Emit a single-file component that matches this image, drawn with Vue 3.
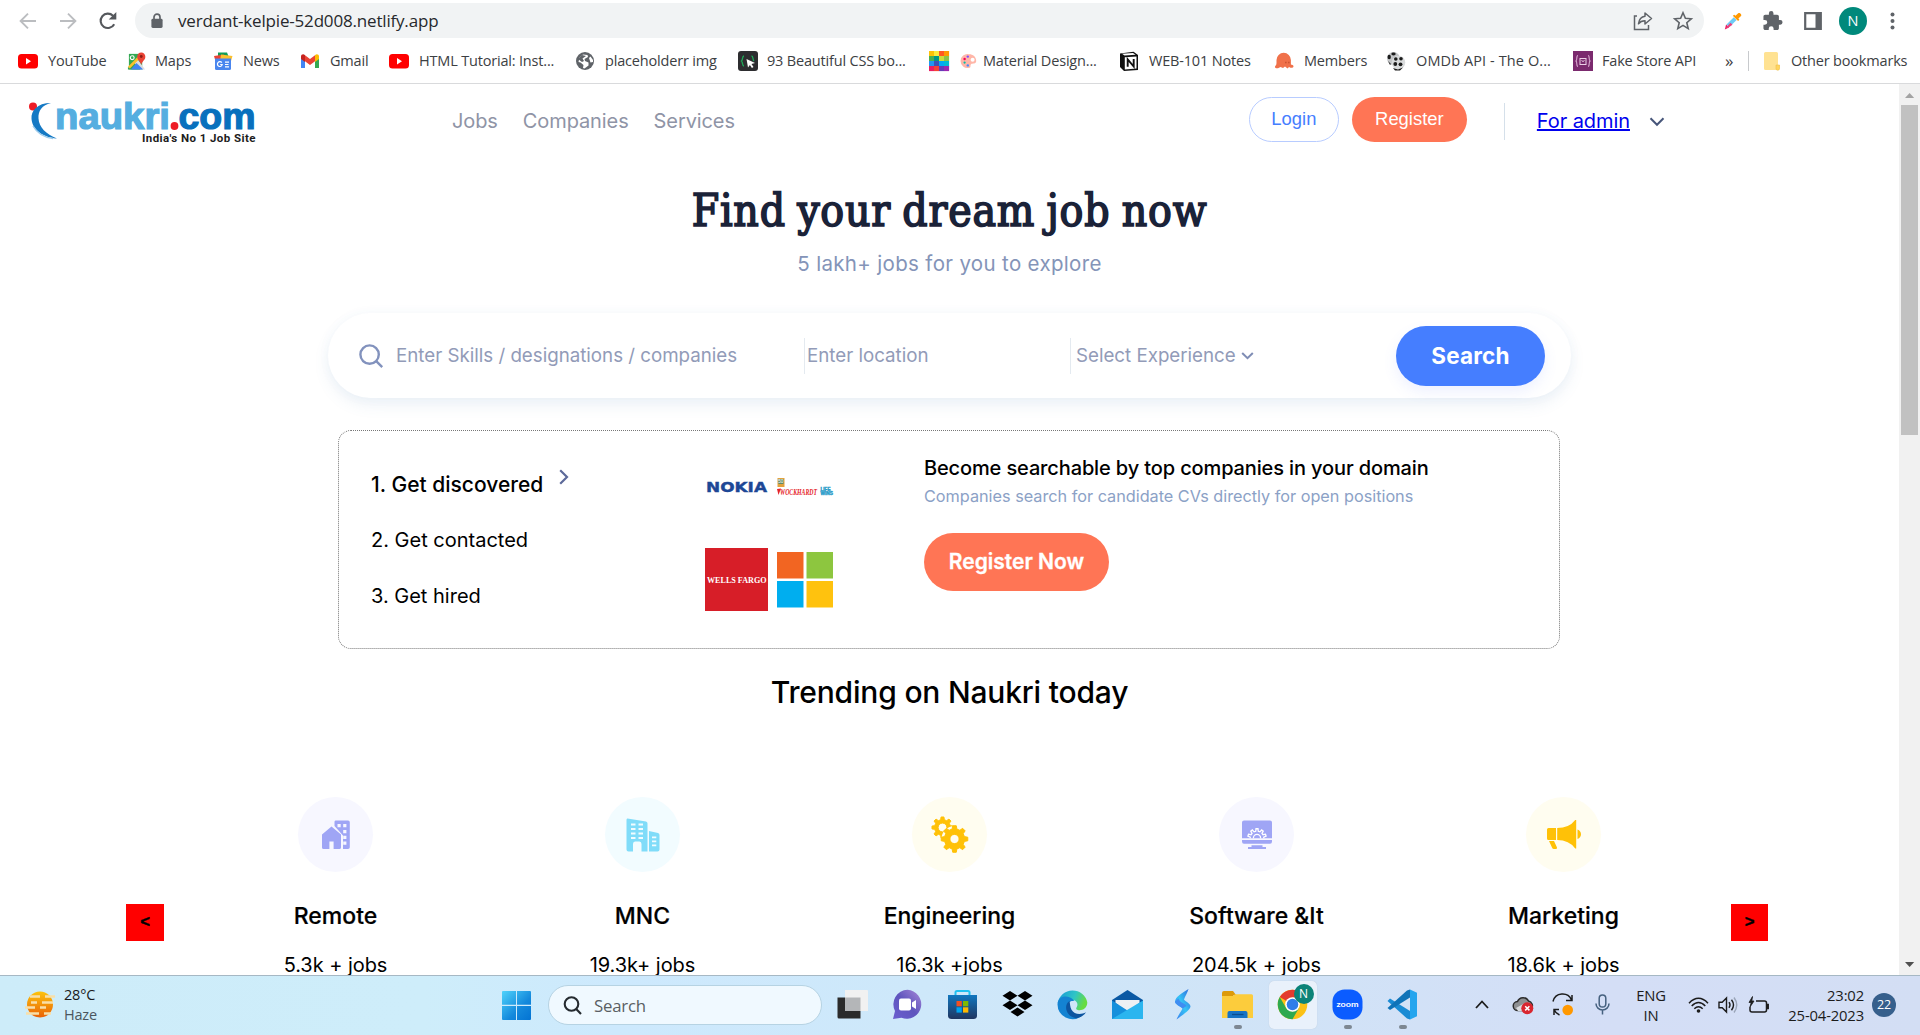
<script setup>
const bookmarks = [
  { icon: 'yt', label: 'YouTube', x: 18, gap: 10, iw: 20 },
  { icon: 'maps', label: 'Maps', x: 127, gap: 9, iw: 19 },
  { icon: 'news', label: 'News', x: 213, gap: 10, iw: 20 },
  { icon: 'gmail', label: 'Gmail', x: 300, gap: 10, iw: 20 },
  { icon: 'yt', label: 'HTML Tutorial: Inst...', x: 389, gap: 10, iw: 20 },
  { icon: 'globe', label: 'placeholderr img', x: 575, gap: 10, iw: 20 },
  { icon: 'css', label: '93 Beautiful CSS bo...', x: 738, gap: 9, iw: 20 },
  { icon: 'grid', label: '', x: 929, gap: 0, iw: 20 },
  { icon: 'palette', label: 'Material Design...', x: 961, gap: 6, iw: 16 },
  { icon: 'notion', label: 'WEB-101 Notes', x: 1119, gap: 10, iw: 20 },
  { icon: 'members', label: 'Members', x: 1274, gap: 10, iw: 20 },
  { icon: 'omdb', label: 'OMDb API - The O...', x: 1386, gap: 10, iw: 20, loose: true },
  { icon: 'fake', label: 'Fake Store API', x: 1573, gap: 9, iw: 20 },
]
const slot = (i) => (i + 1 < bookmarks.length ? bookmarks[i + 1].x : 1725) - bookmarks[i].x

const swatches = [
  '#ffc107', '#ffeb3b', '#ff5722', '#ff9800',
  '#4caf50', '#009688', '#cddc39', '#8bc34a',
  '#2196f3', '#3f51b5', '#03a9f4', '#00bcd4',
  '#e91e63', '#f44336', '#673ab7', '#9c27b0',
]

const trends = [
  { icon: 'remote', title: 'Remote', jobs: '5.3k + jobs', bg: '#f7f7ff' },
  { icon: 'mnc', title: 'MNC', jobs: '19.3k+ jobs', bg: '#f2fcff' },
  { icon: 'eng', title: 'Engineering', jobs: '16.3k +jobs', bg: '#fffdf0' },
  { icon: 'soft', title: 'Software &It', jobs: '204.5k + jobs', bg: '#f7f7ff' },
  { icon: 'mkt', title: 'Marketing', jobs: '18.6k + jobs', bg: '#fffdf0' },
]

function gear(cx, cy, outer, inner, hole, teeth, turn = 0) {
  const step = (Math.PI * 2) / teeth
  const at = (r, a) => `${(cx + r * Math.sin(a)).toFixed(2)} ${(cy - r * Math.cos(a)).toFixed(2)}`
  let d = ''
  for (let i = 0; i < teeth; i++) {
    const a = i * step + turn
    d += `${i ? 'L' : 'M'}${at(inner, a - step * 0.3)}L${at(outer, a - step * 0.17)}L${at(outer, a + step * 0.17)}L${at(inner, a + step * 0.3)}`
  }
  return `${d}ZM${cx - hole} ${cy}a${hole} ${hole} 0 1 0 ${hole * 2} 0a${hole} ${hole} 0 1 0 ${-hole * 2} 0Z`
}
const bigGear = gear(32.5, 29, 13.4, 10.2, 4.6, 8)
const smallGear = gear(20.5, 17.5, 10.6, 8, 4.4, 8)
const screenGear = gear(15, 18, 9.3, 6.8, 3.6, 10)

const apps = ['tasks', 'chat', 'store', 'dropbox', 'edge', 'mail', 'stream', 'folder', 'chrome', 'zoom', 'code']
const running = ['folder', 'zoom', 'code']
</script>

<template>
  <div class="screen">
    <header class="browser">
      <div class="toolbar">
        <svg class="tb back" width="20" height="20" viewBox="0 0 20 20" fill="none" stroke="#bbbdc0" stroke-width="1.9"><path d="M18 10H3M10 2.6L2.6 10l7.4 7.4" /></svg>
        <svg class="tb fwd" width="20" height="20" viewBox="0 0 20 20" fill="none" stroke="#bbbdc0" stroke-width="1.9"><path d="M2 10h15M10 2.6l7.4 7.4-7.4 7.4" /></svg>
        <svg class="tb reload" width="20" height="20" viewBox="0 0 20 20"><path d="M16.2 13.2A7.2 7.2 0 1 1 15 4.8" fill="none" stroke="#55585c" stroke-width="2.1" /><path d="M18.3 1v7.6h-7.6z" fill="#55585c" /></svg>
        <div class="omnibox">
          <svg width="12" height="16" viewBox="0 0 12 16"><path d="M3 6.500V4.200a3 3 0 0 1 6 0v2.300" fill="none" stroke="#5f6368" stroke-width="1.7" /><rect x=".4" y="5.800" width="11.200" height="9.200" rx="1.400" fill="#5f6368" /></svg>
          <span class="url">verdant-kelpie-52d008.netlify.app</span>
          <svg class="share" width="20" height="20" viewBox="0 0 20 20" fill="none" stroke="#5f6368" stroke-width="1.500"><path d="M4 5H1.500v13.500h14V14" /><path d="M12 2l6.500 5.500L12 13V9.800c-3 0-5 1-6.500 3C6 8.500 8.500 5.600 12 5.200z" stroke-linejoin="round" /></svg>
          <svg width="20" height="20" viewBox="0 0 20 20" fill="none" stroke="#5f6368" stroke-width="1.600"><path d="M10 1.800l2.400 5.500 5.900.5-4.500 3.900 1.400 5.900-5.200-3.200-5.200 3.200 1.400-5.900-4.500-3.900 5.900-.5z" /></svg>
        </div>
        <svg class="ext pick" width="18" height="18" viewBox="0 0 18 18"><path d="M2.500 12.500L9.800 5.200l2.800 2.800L5.200 15.300z" fill="#6ecbf5" /><path d="M.8 17.400l1.300-4.900 3 3z" fill="#e91e63" /><path d="M2 15.800l4.500-5 2 2-4.500 3z" fill="#ec407a" /><path d="M8.800 3.800l5.300 5.300 1.300-1.300-1-1.200 2.600-2.600c1.200-1.400-1.400-4-2.800-2.800l-2.700 2.600-1.200-1z" fill="#ff9800" /></svg>
        <svg class="ext puzzle" width="20" height="20" viewBox="2 1 21 22"><path d="M20.500 11H19V7c0-1.100-.9-2-2-2h-4V3.500a2.500 2.500 0 0 0-5 0V5H4c-1.100 0-2 .9-2 2v3.800h1.500a2.700 2.700 0 0 1 0 5.400H2V20c0 1.100.9 2 2 2h3.800v-1.500a2.700 2.700 0 0 1 5.400 0V22H17c1.100 0 2-.9 2-2v-4h1.500a2.500 2.500 0 0 0 0-5z" fill="#5f6368" /></svg>
        <svg class="ext panel" width="18" height="18" viewBox="0 0 18 18"><path d="M1.200 1.200h15.600v15.600H1.200z" fill="none" stroke="#5f6368" stroke-width="2.200" /><path d="M11.500 1H17v16h-5.500z" fill="#5f6368" /></svg>
        <div class="avatar">N</div>
        <svg class="dots" width="5" height="18" viewBox="0 0 5 18" fill="#5f6368"><circle cx="2.500" cy="2.600" r="2" /><circle cx="2.500" cy="9" r="2" /><circle cx="2.500" cy="15.400" r="2" /></svg>
      </div>

      <div class="bookmarks">
        <div v-for="(b, i) in bookmarks" :key="i" :class="['bm', { loose: b.loose }]" :style="{ width: slot(i) + 'px', columnGap: b.gap + 'px' }">
          <svg :width="b.iw" height="20" viewBox="0 0 20 20">
            <template v-if="b.icon === 'yt'"><rect y="3" width="20" height="14.500" rx="3.500" fill="#f00" /><path d="M8 7l5 3.200L8 13.400z" fill="#fff" /></template>
            <template v-else-if="b.icon === 'maps'"><path d="M2 2.500h14V19H2z" fill="#34a853" /><path d="M1 18L11 8l8 11H2z" fill="#dadce0" /><path d="M1 19V17L7 11l7 8z" fill="#34a853" /><path d="M4 19l6-7 7 7z" fill="#4285f4" /><path d="M1 16L14 3l2 2L3 18z" fill="#fbc02d" /><circle cx="5.500" cy="6.500" r="2" fill="none" stroke="#fff" stroke-width="1.200" /><path d="M15 1a4.300 4.300 0 0 0-4.300 4.500C10.700 9 14 10 15 14c1-4 4.300-5 4.300-8.500A4.300 4.300 0 0 0 15 1z" fill="#ea4335" /><circle cx="15" cy="5.300" r="1.500" fill="#8c1f15" /></template>
            <template v-else-if="b.icon === 'news'"><path d="M5 1.500h9l2 5H5z" fill="#0f9d58" /><path d="M1 5l10-1.500 1 5H2z" fill="#ea4335" /><path d="M8 3.500L19.500 5 18 10H7z" fill="#fbc02d" /><path d="M2 7.500h16v10a1.500 1.500 0 0 1-1.500 1.500h-13A1.500 1.500 0 0 1 2 17.500z" fill="#4a86ee" /><path d="M8.800 11.700A2.400 2.400 0 1 0 9.200 13.500H7.200M12 11.200h4M12 13.500h3.500M12 15.800h4" stroke="#fff" stroke-width="1.200" fill="none" /></template>
            <template v-else-if="b.icon === 'gmail'"><path d="M1 5v12h4V9z" fill="#4285f4" /><path d="M19 5v12h-4V9z" fill="#34a853" /><path d="M1 5.500C1 3.500 3.300 2.600 4.800 4L5 4.200V11L1 8z" fill="#c5221f" /><path d="M19 5.500c0-2-2.300-2.900-3.800-1.500l-.2.200V11l4-3z" fill="#fbbc04" /><path d="M5 4.200l5 3.800 5-3.800V10.200L10 14 5 10.200z" fill="#ea4335" /></template>
            <template v-else-if="b.icon === 'globe'"><circle cx="10" cy="10" r="9" fill="#5f6368" /><path d="M4.500 6.500L8 3.500l4.500.5.500 2-3.500 2 .5 2 3.500 1.500v3l-4 3-1.500-.5.500-3-3-2.500L3.500 11z" fill="#fff" /><path d="M3 8l4 3 2-1-1.500-2.500L11 5l-4-1zM15 6l2.500 1.500.5 4-3 .5-2-2z" fill="#5f6368" /><path d="M14 7l1.500-1.500L18 9v2l-2.500.5z" fill="#fff" /></template>
            <template v-else-if="b.icon === 'css'"><rect width="20" height="20" rx="3" fill="#2d2d30" /><path d="M6 5c-2 0-1 4-2.500 5C5 11 4 15 6 15M13.500 5c2 0 1 4 2.500 5" fill="none" stroke="#1faa59" stroke-width="1.300" /><path d="M8.500 8l8.500 4-3.500 1 2 3-1.600 1-2-3-1.900 2.500z" fill="#fff" /></template>
            <template v-else-if="b.icon === 'grid'"><rect v-for="(c, n) in swatches" :key="n" :x="(n % 4) * 5" :y="Math.floor(n / 4) * 5" width="5.100" height="5.100" :fill="c" /></template>
            <template v-else-if="b.icon === 'palette'"><path d="M10 1.500a8.700 8.700 0 1 0 0 17c3 0 1-3 2.500-4.500S19 14.500 19 10C19 4.500 15 1.500 10 1.500z" fill="#ffb6a8" /><circle cx="4.500" cy="7.500" r="1.500" fill="#f50057" /><circle cx="4.500" cy="12" r="1.400" fill="#00bfa5" /><circle cx="8.500" cy="4.500" r="1.500" fill="#7c4dff" /><circle cx="8.500" cy="15.500" r="1.500" fill="#448aff" /><circle cx="14.500" cy="8.500" r="2.500" fill="#fff" /></template>
            <template v-else-if="b.icon === 'notion'"><path d="M1 2.500L14.500.800 19 4v15L5 20 1 16z" fill="#111" /><path d="M3 2.800l11-.8 2.600 1.800L5.500 4.600zM5.800 6.200L17.500 5.400v12.200L5.800 18.400z" fill="#fff" /><path d="M8.700 15.800V8.300l6 7.200V8" fill="none" stroke="#111" stroke-width="1.900" /></template>
            <template v-else-if="b.icon === 'members'"><path d="M2.500 12V9a7.200 7.200 0 0 1 14.400 0v4.500c1 .2 2.600.5 2.600 2 0 1.200-1.500 1.500-3 1.300l-1.500-.8-1.500 1.500L11 15.500l-2 1.500-2.500-1L4 17.200c-2 .3-3.500-.5-3-1.700.3-1 1.500-1 1.500-3.500z" fill="#f0714a" /><path d="M11.500 11.500h.8M14.500 11.500h.8" stroke="#a33b1d" stroke-width="1.300" /></template>
            <template v-else-if="b.icon === 'omdb'"><circle cx="7.500" cy="7.500" r="6.500" fill="#c3c5c7" /><circle cx="12.500" cy="11.500" r="6.800" fill="#d9dbdc" /><g fill="#1c1c1c"><ellipse cx="3.200" cy="6" rx="1.700" ry="2.300" /><ellipse cx="7.500" cy="3" rx="2.200" ry="1.400" /><circle cx="9.800" cy="8" r="1.800" /><circle cx="15" cy="7.800" r="1.800" /><circle cx="9.300" cy="13" r="1.900" /><circle cx="14.500" cy="13.300" r="1.900" /><path d="M7 17l5 1.500 5-2-3 3H9zM2 10l3 3-1 1z" /></g></template>
            <template v-else-if="b.icon === 'fake'"><rect width="20" height="20" fill="#7b2a6e" /><path d="M5 4.500c-2 0-.5 4.500-2 5.500 1.500 1 0 5.500 2 5.500M15 4.500c2 0 .5 4.500 2 5.500-1.500 1 0 5.500-2 5.500" fill="none" stroke="#d9a9d0" stroke-width="1.100" /><rect x="7" y="7.500" width="6" height="6" fill="none" stroke="#ecd0e6" /><path d="M8.500 9.500q1.500 2 3 0" stroke="#ecd0e6" fill="none" /></template>
          </svg>
          <span>{{ b.label }}</span>
        </div>
        <span class="more">»</span>
        <div class="bm other">
          <svg width="18" height="20" viewBox="0 0 18 20"><path d="M2.500 1h11A1.500 1.500 0 0 1 15 2.500V14h1.500v3.500A1.500 1.500 0 0 1 15 19H2.500A1.500 1.500 0 0 1 1 17.500v-15A1.500 1.500 0 0 1 2.500 1z" fill="#ffe292" /><path d="M15 14h-2v3.500a1.500 1.500 0 0 0 3.500 0V14z" fill="#ffd55e" stroke="#eec04e" stroke-width=".6" /></svg>
          <span>Other bookmarks</span>
        </div>
      </div>
    </header>

    <main class="view">
      <div class="page">
        <nav class="nav">
          <svg class="logo" width="228" height="42" viewBox="0 0 228 42">
            <circle cx="4" cy="4.500" r="4" fill="#ee1c25" />
            <path d="M22 1C8 1 2 9 2.500 16.500 3 26 11 35 28 36.500 17 32 10 25.500 9.500 16.500 9 9 13 3 22 1z" fill="#1579c4" />
            <path d="M4 24c4 7 11 11.500 20 12.500" fill="none" stroke="#9ccbec" stroke-width="1.500" />
            <text x="26" y="27" textLength="115" lengthAdjust="spacingAndGlyphs" class="brand" fill="#55aee0" stroke="#55aee0">naukri</text>
            <circle cx="145.500" cy="24" r="3.900" fill="#ee1c25" />
            <text x="149.500" y="27" textLength="77" lengthAdjust="spacingAndGlyphs" class="brand" fill="#0870bd" stroke="#0870bd">com</text>
            <text x="113" y="39.800" textLength="113.500" lengthAdjust="spacing" class="tag">India's No 1 Job Site</text>
          </svg>
          <a class="link">Jobs</a><a class="link">Companies</a><a class="link">Services</a>
          <button class="login">Login</button>
          <button class="register">Register</button>
          <div class="admin"><a>For admin</a>
            <svg width="16" height="10" viewBox="0 0 16 10" fill="none" stroke="#47567a" stroke-width="2"><path d="M1.500 1.200L8 7.800l6.500-6.600" /></svg>
          </div>
        </nav>

        <h1>Find your dream job now</h1>
        <p class="sub">5 lakh+ jobs for you to explore</p>

        <div class="search">
          <svg width="24" height="24" viewBox="0 0 24 24" fill="none" stroke="#8292bd" stroke-width="2.400"><circle cx="10.600" cy="10.600" r="9.200" /><path d="M17.200 17.200l6 6" /></svg>
          <span class="f skills">Enter Skills / designations / companies</span>
          <span class="f loc">Enter location</span>
          <span class="f exp">Select Experience
            <svg width="13" height="8" viewBox="0 0 13 8" fill="none" stroke="#7f8db5" stroke-width="2"><path d="M1.200 1l5.300 5.200L11.800 1" /></svg>
          </span>
          <button>Search</button>
        </div>

        <section class="card">
          <ol>
            <li class="on">1. Get discovered<svg width="10" height="16" viewBox="0 0 10 16" fill="none" stroke="#5d6a9a" stroke-width="2.200"><path d="M1.200 1.200L8 8l-6.800 6.800" /></svg></li>
            <li>2. Get contacted</li>
            <li>3. Get hired</li>
          </ol>
          <div class="logos">
            <svg width="63" height="24" viewBox="0 0 63 24"><text x="1" y="16" textLength="61" lengthAdjust="spacingAndGlyphs" class="nokia">NOKIA</text></svg>
            <svg width="58" height="24" viewBox="0 0 58 24"><rect x=".5" y="2" width="7" height="9" fill="#e3a23c" /><rect x="1.500" y="3" width="5" height="5" fill="#5d8a6a" /><text x="1.300" y="7.300" font-size="4.500" fill="#fff" font-family="Liberation Sans">50</text><text x="3" y="19" textLength="37" lengthAdjust="spacingAndGlyphs" class="wock">WOCKHARDT</text><path d="M0 13l4-.5L1.500 19z" fill="#e5242a" /><g class="wins"><text x="43.500" y="14.500" textLength="10" lengthAdjust="spacingAndGlyphs">LIFE</text><text x="43.500" y="19" textLength="12.500" lengthAdjust="spacingAndGlyphs">WINS</text></g></svg>
            <div class="wells"><svg width="63" height="20" viewBox="0 0 63 20"><text x="2" y="13" textLength="59.500" lengthAdjust="spacingAndGlyphs">WELLS FARGO</text></svg></div>
            <svg width="56" height="56" viewBox="0 0 56 56"><path d="M0 0h26.500v26.500H0z" fill="#f26522" /><path d="M29.500 0H56v26.500H29.500z" fill="#8dc63f" /><path d="M0 29h26.500v26.500H0z" fill="#00aeef" /><path d="M29.500 29H56v26.500H29.500z" fill="#ffc20e" /></svg>
          </div>
          <div class="pitch">
            <h3>Become searchable by top companies in your domain</h3>
            <p>Companies search for candidate CVs directly for open positions</p>
            <button>Register Now</button>
          </div>
        </section>

        <h2>Trending on Naukri today</h2>

        <section class="trends">
          <button class="arrow">&lt;</button>
          <div class="cells">
            <article v-for="t in trends" :key="t.title">
              <div class="disc" :style="{ background: t.bg }">
                <svg v-if="t.icon === 'remote'" width="30" height="30" viewBox="0 0 30 30"><path fill-rule="evenodd" d="M14.500.500h12.500a1.800 1.800 0 0 1 1.800 1.800v25a1.800 1.800 0 0 1-1.800 1.800h-5V15.500L13.500 6V2a1.500 1.500 0 0 1 1-1.500zM16.500 4v3.200h3.200V4zM22.200 4v3.200h3.200V4zM22.200 10v3.200h3.200V10zM22.200 15.800V19h3.200v-3.200zM22.200 21.600v3.200h3.200v-3.200z" fill="#9fa5f5" /><path d="M1 14.500L10.500 6.500 20 14.500v13a1.600 1.600 0 0 1-1.600 1.600H12.600v-7.500H8.400v7.500H2.600A1.600 1.600 0 0 1 1 27.500z" fill="#9fa5f5" /></svg>
                <svg v-else-if="t.icon === 'mnc'" width="34" height="34" viewBox="0 0 34 34"><path fill-rule="evenodd" d="M1.500.500L20 3.500q1.500.300 1.500 2V33.500h-6V26q0-2.500-2-2.500h-4.500q-2 0-2 2.500v7.500H2.500Q.500 33.500.500 31.500V2Q.500.300 1.500.500zM5 5.500v2h4.500v-2zM12.500 5.500v2H17v-2zM5 10v2h4.500v-2zM12.500 10v2H17v-2zM5 14.500v2h4.500v-2zM12.500 14.500v2H17v-2zM5 19v2h4.500v-2zM12.500 19v2H17v-2z" fill="#80dcf9" /><path fill-rule="evenodd" d="M23 13l9 2q1.500.300 1.500 2v14.500q0 2-2 2H23zM26 18.500v1.700h4.300v-1.700zM26 22.500v1.700h4.300v-1.700zM26 26.500v1.700h4.300v-1.700z" fill="#80dcf9" /></svg>
                <svg v-else-if="t.icon === 'eng'" width="56" height="50" viewBox="0 0 56 50"><path fill-rule="evenodd" :d="smallGear" fill="#ffc107" stroke="#ffc107" stroke-linejoin="round" /><circle cx="32.500" cy="29" r="13" :fill="t.bg" /><path fill-rule="evenodd" :d="bigGear" fill="#ffc107" stroke="#ffc107" stroke-linejoin="round" /></svg>
                <svg v-else-if="t.icon === 'soft'" width="32" height="30" viewBox="-.5 0 31 30"><path d="M0 2.500Q0 .500 2 .500h26q2 0 2 2v15.700H0zM0 20h30v1.500q0 2.300-2 2.300H2q-2 0-2-2.300zM9.500 25.300h11V27H24v2H6v-2h3.500z" fill="#9fa5f5" /><clipPath id="lap"><path d="M0 0h30v18.300H0z" /></clipPath><path clip-path="url(#lap)" fill-rule="evenodd" :d="screenGear" fill="none" stroke="#fff" stroke-width="1.300" /></svg>
                <svg v-else width="36" height="30" viewBox="0 0 36 30"><path d="M2.500 8H10v12H2.500Q1 20 1 18.500V9.500Q1 8 2.500 8zM3 21h5l3 6.500q.500 1.500-1.500 1.500H8q-1.500 0-2-1.500zM11.200 8q12 0 18-8h1v28.500h-1q-6-8.500-18-8.500zM31.500 9.500Q35 11 35 14.200T31.500 19z" fill="#ffc107" /></svg>
              </div>
              <h4>{{ t.title }}</h4>
              <p>{{ t.jobs }}</p>
            </article>
          </div>
          <button class="arrow next">&gt;</button>
        </section>
      </div>

      <div class="scroll">
        <svg width="21" height="21" viewBox="0 0 21 21"><path d="M6 14l4.600-5 4.600 5z" fill="#a3a3a3" /></svg>
        <div class="thumb"></div>
        <svg width="21" height="21" viewBox="0 0 21 21"><path d="M6 8l4.600 5 4.600-5z" fill="#505050" /></svg>
      </div>
    </main>

    <footer class="taskbar">
      <div class="weather">
        <svg width="30" height="28" viewBox="0 0 30 28"><defs><linearGradient id="sun" x1="0" y1="0" x2="0" y2="1"><stop offset="0" stop-color="#fdc30d" /><stop offset="1" stop-color="#e96207" /></linearGradient></defs><circle cx="15" cy="13.500" r="13" fill="url(#sun)" /><path d="M5 5.500h10M20 5.500h10M6 11.500h6M17 11.500h11M0 16.500h10M15 16.500h6M1 22.500h13M19 22.500h7" stroke="#f8dfa9" stroke-width="2.600" /></svg>
        <div><b>28°C</b><span>Haze</span></div>
      </div>
      <svg class="start" width="29" height="29" viewBox="0 0 29 29"><defs><linearGradient id="win" x1="0" y1="0" x2="1" y2="1"><stop offset="0" stop-color="#50d3fb" /><stop offset=".6" stop-color="#1489dc" /><stop offset="1" stop-color="#0373d3" /></linearGradient></defs><path d="M1 0h13v13.800H0V1a1 1 0 0 1 1-1zM15 0h13a1 1 0 0 1 1 1v12.800H15zM0 15h14v14H1a1 1 0 0 1-1-1zM15 15h14v13a1 1 0 0 1-1 1H15z" fill="url(#win)" /></svg>
      <div class="find"><svg width="19" height="19" viewBox="0 0 19 19" fill="none" stroke="#252b30" stroke-width="2.100"><circle cx="8.500" cy="8" r="6.800" /><path d="M13.200 13l4.800 5" /></svg><span>Search</span></div>
      <div class="apps">
        <div v-for="a in apps" :key="a" class="app">
          <div :class="['tile', { active: a === 'chrome' }]">
            <svg width="31" height="31" viewBox="0 0 31 31">
              <template v-if="a === 'tasks'"><path d="M.500 8.500h23v21H2A1.500 1.500 0 0 1 .500 28z" fill="#2b2b2b" /><path d="M8 1h22a1 1 0 0 1 1 1v20H8z" fill="#f1f1f1" /><path d="M8 8.500h15.500V22H8z" fill="#b4b6b8" /></template>
              <template v-else-if="a === 'chat'"><defs><linearGradient id="ch" x1="0" y1="1" x2="1" y2="0"><stop offset="0" stop-color="#6a5fd0" /><stop offset=".5" stop-color="#5f55bd" /><stop offset="1" stop-color="#a888d8" /></linearGradient></defs><path d="M15.500.800a14.500 14.500 0 1 1-6 28L1 30l2-8A14.500 14.500 0 0 1 15.500.800z" fill="url(#ch)" /><rect x="7" y="9.500" width="12" height="12" rx="2" fill="#fff" /><path d="M20 13.500l4-2.500v9L20 17.500z" fill="#fff" /></template>
              <template v-else-if="a === 'store'"><defs><linearGradient id="st" x1="0" y1="0" x2="0" y2="1"><stop offset="0" stop-color="#1177bf" /><stop offset="1" stop-color="#203660" /></linearGradient></defs><path d="M8.500 7V3.500Q8.500 2 10 2h11q1.500 0 1.500 1.500V7" fill="none" stroke="#22c1f0" stroke-width="2" /><path d="M1 6h29v20.500Q30 30 26.500 30h-22Q1 30 1 26.500z" fill="url(#st)" /><path d="M9.500 12h5.300v5.300H9.500z" fill="#f25022" /><path d="M16 12h5.300v5.300H16z" fill="#7fba00" /><path d="M9.500 18.300h5.300v5.300H9.500z" fill="#00a4ef" /><path d="M16 18.300h5.300v5.300H16z" fill="#ffb900" /></template>
              <template v-else-if="a === 'dropbox'"><path d="M8 2l7.500 4.700L8 11.400.500 6.700zM23 2l7.500 4.700L23 11.400l-7.500-4.700zM8 11.600l7.500 4.700L8 21 .500 16.300zM23 11.600l7.500 4.700L23 21l-7.500-4.700zM15.500 18.500l7 4.400-7 4.700-7-4.700z" fill="#000" /></template>
              <template v-else-if="a === 'edge'"><defs><linearGradient id="e1" x1="0" y1="0" x2="1" y2=".3"><stop offset="0" stop-color="#1596d8" /><stop offset=".6" stop-color="#30c5c6" /><stop offset="1" stop-color="#66dc42" /></linearGradient></defs><path d="M.800 14A15 15 0 0 1 30.300 13.500c0 6-5.500 8.500-9.500 7.500-2-.500-2-1.500-1-3 2-3.500-.800-7-4.300-7C9 11 6 14 .800 14z" fill="url(#e1)" /><path d="M.500 15.500C.500 8 8 6 13 8.500c2 1 4 2.500 4 3.500-6-1-8 5-5 10 2.500 4.200 7 6.500 12 5.500A15 15 0 0 1 .500 15.500z" fill="#1483d2" /><path d="M12.500 12C6 16 9 28 20 29.200c4-.700 7-3 9-6-5 2.800-12 2.300-14.500-2.500-1.600-3-1.300-6-2-8.700z" fill="#0d55a0" /></template>
              <template v-else-if="a === 'mail'"><path d="M0 11L15.500 1 31 11v5H0z" fill="#0b59a4" /><path d="M3.500 11h24v3l-12 8-12-8z" fill="#eef0f3" /><path d="M0 11.500L15.500 21.500 31 30H0z" fill="#1690dc" /><path d="M31 11.500L0 30h31z" fill="#2bb5ef" /></template>
              <template v-else-if="a === 'stream'"><defs><linearGradient id="sr" x1="0" y1="1" x2="1" y2="0"><stop offset="0" stop-color="#3d7cf0" /><stop offset=".5" stop-color="#35c3f5" /><stop offset="1" stop-color="#2f63dc" /></linearGradient></defs><path d="M21.500 0C15 4 8.500 7.500 8 12.500c0 3 5 4.500 7.500 7C14 23 11 26.500 9.500 30.500 17 25 23 21 23.500 17.500c0-3-4.500-4.500-6.500-7C18 7 20.500 4 21.500 0z" fill="url(#sr)" /><path d="M8 12.500c0 3 5 4.500 7.500 7l4-2.500c-1-2.500-7.500-3.500-8-7.500z" fill="#3f8df2" /></template>
              <template v-else-if="a === 'folder'"><path d="M0 4Q0 2 2 2h9l3 4h-2l-2 2H0z" fill="#dd9a0a" /><path d="M0 7h11l2-1.800h16.500A1.500 1.500 0 0 1 31 6.700V29H0z" fill="#fccc3c" /><path d="M5.500 29v-5Q5.500 22 7.500 22h16q2 0 2 2v5z" fill="#1673c5" /><path d="M10 25.500h11.500" stroke="#0a4d8f" stroke-width="1.300" /></template>
              <template v-else-if="a === 'chrome'"><circle cx="15.500" cy="15.500" r="14.800" fill="#fbc116" /><path d="M15.500 15.500L2.700 8.100a14.800 14.800 0 0 1 25.600 0L15.500 8.500z" fill="#e33b2e" /><path d="M2.700 8.100A14.800 14.800 0 0 0 15.500 30.300L22 19 15.500 22.500 9.400 19.500z" fill="#2da94f" /><circle cx="15.500" cy="15.500" r="7.300" fill="#fff" /><circle cx="15.500" cy="15.500" r="5.800" fill="#2f7de9" /></template>
              <template v-else-if="a === 'zoom'"><rect x=".500" y=".500" width="30" height="30" rx="12" fill="#0b5cff" /><text x="4.500" y="18" textLength="22" lengthAdjust="spacingAndGlyphs" class="zm">zoom</text></template>
              <template v-else><path d="M23 .500l7 3.300v23.400l-7 3.300z" fill="#25a5ee" /><path d="M23 22L3 9.500.500 12 20 29.500 23 30.500z" fill="#1a8bd4" /><path d="M.500 19L3 21 23 8.500V.500L20 1.500z" fill="#0f73b8" /></template>
            </svg>
            <span v-if="a === 'chrome'" class="who">N</span>
          </div>
          <i v-if="running.includes(a)"></i>
          <i v-if="a === 'chrome'" class="wide"></i>
        </div>
      </div>
      <div class="tray">
        <svg width="14" height="9" viewBox="0 0 14 9" fill="none" stroke="#1c1c1c" stroke-width="1.800"><path d="M1 8l6-6.500L13 8" /></svg>
        <svg width="22" height="20" viewBox="0 0 22 20"><path d="M6 15.500a4.500 4.500 0 0 1-.500-9A6 6 0 0 1 16.500 6a4.800 4.800 0 0 1 3 7.500L10 15.500z" fill="#8f9193" stroke="#2c2c2c" stroke-width="1.500" /><path d="M4 13l9-5 5 4-7 4H6z" fill="#d9dbdd" /><circle cx="15.300" cy="13.300" r="6" fill="#d9262f" /><path d="M13.200 11.200l4.200 4.200M17.400 11.200l-4.200 4.200" stroke="#fff" stroke-width="1.500" /></svg>
        <svg width="22" height="24" viewBox="0 0 22 24" fill="none" stroke="#1c1c1c" stroke-width="1.500"><path d="M1 8.500A9.800 9.800 0 0 1 19.500 7M20 2v5.500h-6M7.500 22A10 10 0 0 1 2 16.500M2 22v-5.500h5" /><circle cx="15.700" cy="17" r="5.300" fill="#ff9800" stroke="none" /></svg>
        <svg width="15" height="21" viewBox="0 0 15 21" fill="none" stroke="#46617f" stroke-width="1.500"><rect x="4.200" y="1" width="6.600" height="12" rx="3.300" /><path d="M1 9.500a6.500 6.500 0 0 0 13 0M7.500 16v4.500" /></svg>
        <div class="lang"><span>ENG</span><span>IN</span></div>
        <svg width="21" height="16" viewBox="0 0 21 16" fill="none" stroke="#1c1c1c" stroke-width="1.500"><path d="M1 6.200Q10.500-3.500 20 6.200M3.700 9Q10.500 2 17.300 9M6.300 11.800q4.200-4 8.400 0" /><circle cx="10.500" cy="14" r="1.800" fill="#1c1c1c" stroke="none" /></svg>
        <svg width="20" height="18" viewBox="0 0 20 18" fill="none" stroke="#1c1c1c" stroke-width="1.400"><path d="M1 6.300h3.200L8.500 2v14L4.200 11.700H1zM11 6.200q2 2.800 0 5.600M13.500 3.800q4 5.200 0 10.400" /><path d="M16 1.500q5.500 7.500 0 15" stroke="#9aa5b8" /></svg>
        <svg width="21" height="18" viewBox="0 0 21 18" fill="none" stroke="#1c1c1c" stroke-width="1.500"><path d="M8 5h8.500q2 0 2 2v7q0 2-2 2H4q-2 0-2-2v-3" /><path d="M19 8.500h1.200v4H19z" fill="#1c1c1c" /><path d="M4.500.500L1 6.500h2.200L2 11l4-6H3.800z" fill="#1c1c1c" stroke-width=".8" /></svg>
        <div class="clock"><span>23:02</span><span>25-04-2023</span></div>
        <div class="count">22</div>
      </div>
    </footer>
  </div>
</template>

<style>
body { margin: 0; overflow: hidden; }
</style>

<style scoped>
* { box-sizing: border-box; }
.screen { width: 1920px; height: 1035px; display: flex; flex-direction: column; overflow: hidden; background: #fff; font-family: Inter, sans-serif; color: #000; }
svg { display: block; flex: none; overflow: visible; }
h1, h2, h3, h4, p, ol { margin: 0; padding: 0; font-weight: 400; }
button { border: 0; padding: 0; }

.browser { height: 84px; border-bottom: 1px solid #d9dadc; font-family: "Open Sans", sans-serif; color: #3c4043; }
.toolbar { height: 41px; display: flex; align-items: center; }
.back { margin-left: 18px; }
.fwd { margin-left: 20px; }
.reload { margin-left: 20px; }
.omnibox { margin-left: 17px; width: 1569px; height: 35px; border-radius: 18px; background: #f1f3f4; display: flex; align-items: center; padding: 0 11px 0 16px; }
.url { margin-left: 15px; font-size: 17px; letter-spacing: -.18px; color: #27292c; flex: 1; }
.share { margin-right: 20px; }
.pick { margin-left: 20px; }
.puzzle { margin-left: 21px; }
.panel { margin-left: 21px; }
.avatar { margin-left: 17px; width: 28px; height: 28px; border-radius: 50%; background: #00897b; color: #fff; font-size: 14.500px; text-align: center; line-height: 28px; }
.dots { margin-left: 23px; }
.bookmarks { height: 40px; padding-left: 18px; display: flex; align-items: center; }
.bm { display: flex; align-items: center; font-size: 14.500px; letter-spacing: -.18px; white-space: nowrap; line-height: 20px; }
.loose { letter-spacing: .1px; }
.more { width: 23px; font-size: 17px; line-height: 20px; }
.other { border-left: 1px solid #c8cacd; height: 20px; padding-left: 14px; column-gap: 10px; }

.view { height: 891px; display: flex; overflow: hidden; }
.page { width: 1899px; height: 891px; overflow: hidden; display: flex; flex-direction: column; align-items: center; }
.scroll { width: 21px; background: #f1f1f1; display: flex; flex-direction: column; }
.thumb { width: 17px; height: 330px; background: #c1c1c1; margin: 0 2px auto; }

.nav { width: 100%; height: 75px; display: flex; align-items: center; font-size: 20px; flex: none; }
.logo { margin-left: 29px; margin-right: 170px; margin-top: 2px; }
.brand { font: 700 37px "Liberation Sans", sans-serif; stroke-width: 1.200px; }
.tag { font: 700 11.500px Roboto, sans-serif; fill: #1d1d1d; }
.link { color: #8f94a6; margin-left: 25px; letter-spacing: -.1px; line-height: 24px; margin-top: -1px; }
.logo + .link { margin-left: 25px; }
.login, .register { height: 45px; border-radius: 23px; font: 18.400px "Liberation Sans", sans-serif; margin-top: -5px; }
.login { width: 90px; margin-left: 514px; border: 1px solid #b8ccff; background: #fff; color: #457eff; }
.register { width: 115px; margin-left: 13px; background: #ff7555; color: #fff; }
.admin { margin-left: 37px; margin-top: -1px; height: 37px; border-left: 1px solid #d5e0ea; padding-left: 32px; display: flex; align-items: center; color: #0000ee; letter-spacing: -.08px; }
.admin a { text-decoration: underline; margin-top: -1px; }
.admin svg { margin-left: 19px; margin-top: 1px; }

h1 { margin-top: 22px; height: 60px; line-height: 60px; font: 400 44px/60px "DejaVu Serif Condensed", "DejaVu Serif", serif; font-stretch: condensed; color: #1a2238; -webkit-text-stroke: 1.600px #1a2238; letter-spacing: .8px; word-spacing: -2px; flex: none; }
.sub { margin-top: 8px; font-size: 20.500px; letter-spacing: .33px; line-height: 30px; color: #8494b8; flex: none; }

.search { margin-top: 34px; width: 1243px; height: 85px; border-radius: 43px; flex: none; display: flex; align-items: center; padding-left: 31px; box-shadow: 0 7px 15px rgba(75, 130, 175, .1), 0 0 14px rgba(75, 130, 200, .03); }
.search .f { font-size: 18.750px; color: #929bb8; line-height: 36px; height: 36px; white-space: nowrap; letter-spacing: -.02px; }
.skills { margin-left: 13px; width: 408px; }
.loc { width: 266px; border-left: 1px solid #e4eaf0; padding-left: 2px; }
.exp { width: 326px; border-left: 1px solid #e4eaf0; padding-left: 5px; display: flex; align-items: center; column-gap: 5px; }
.search button { width: 149px; height: 60px; border-radius: 30px; background: #457eff; color: #fff; font: 700 22.500px Inter, sans-serif; letter-spacing: .2px; box-shadow: 0 6px 14px rgba(90, 120, 255, .1); }

.card { margin-top: 32px; margin-right: 1px; width: 1222px; height: 219px; border: 1px dotted #777; border-radius: 13px; display: flex; padding-left: 32px; flex: none; }
ol { width: 334px; padding-top: 25px; list-style: none; }
li { height: 56px; line-height: 56px; font-size: 20px; }
.on { display: flex; font-size: 21px; font-weight: 500; line-height: 58px; }
.on svg { margin: 13px 0 0 16px; }
.logos { width: 219px; padding-top: 45px; display: grid; grid-template-columns: 63px 58px; column-gap: 9px; grid-template-rows: 24px 63px; row-gap: 48px; align-items: center; }
.nokia { font: 700 14px "DejaVu Sans", sans-serif; fill: #1d4796; stroke: #1d4796; stroke-width: .4px; }
.wock { font: italic 700 7.500px "Liberation Serif", serif; fill: #e5242a; }
.wins { font: 700 4.500px "Liberation Sans", sans-serif; fill: #2a9cc9; stroke: #2a9cc9; stroke-width: .4px; }
.wells { width: 63px; height: 63px; background: #d71e28; display: flex; align-items: center; }
.wells text { font: 700 9px "Liberation Serif", serif; fill: #fff; }
.pitch { padding-top: 23px; }
h3 { font-size: 20px; font-weight: 500; letter-spacing: -.13px; line-height: 28px; }
.pitch p { font-size: 16.250px; line-height: 28px; color: #8ba1c6; letter-spacing: -.01px; }
.pitch button { margin-top: 23px; width: 185px; height: 58px; border-radius: 29px; background: #ff7555; color: #fff; font: 600 21px/56px Inter, sans-serif; -webkit-text-stroke: .3px #fff; }

h2 { margin-top: 23px; font-size: 30px; font-weight: 500; letter-spacing: -.19px; line-height: 40px; flex: none; }
.trends { margin-top: 85px; width: 100%; display: flex; padding-left: 126px; flex: none; }
.arrow { margin-top: 107px; width: 38px; height: 37px; background: #f00; color: #000; font: 700 16.700px/33px "Liberation Sans", sans-serif; padding-bottom: 2px; -webkit-text-stroke: .4px #000; }
.next { margin-left: 14px; width: 37px; }
.cells { margin-left: 18px; display: grid; grid-template-columns: repeat(5, 307px); }
article { display: flex; flex-direction: column; align-items: center; }
.disc { width: 75px; height: 75px; border-radius: 50%; display: flex; align-items: center; justify-content: center; }
h4 { margin-top: 29px; font-size: 23px; font-weight: 500; line-height: 30px; -webkit-text-stroke: .2px #000; }
article p { margin-top: 19px; font-size: 20px; line-height: 30px; letter-spacing: -.05px; }

.taskbar { height: 60px; border-top: 1px solid #a6b8c4; background: linear-gradient(90deg, #cdecf9 0, #ceedfa 22%, #cde9fd 32%, #cee8fa 48%, #d0e4f7 64%, #d4def6 84%, #d3def4 100%); display: flex; align-items: center; font-family: "Open Sans", sans-serif; color: #1b1b1b; }
.weather { width: 502px; padding-left: 25px; display: flex; align-items: center; column-gap: 9px; font-size: 14.500px; line-height: 20px; letter-spacing: -.2px; margin-top: -2px; }
.weather div { display: flex; flex-direction: column; }
.weather b { font-weight: 400; }
.weather span { color: #4b565e; }
.find { margin-left: 17px; margin-top: -1px; width: 274px; height: 40px; border-radius: 20px; background: #f0f9ff; border: 1px solid #b6d3e3; display: flex; align-items: center; padding-left: 14px; font-size: 16.800px; letter-spacing: -.2px; color: #5a5f63; column-gap: 12px; }
.apps { margin-left: 3px; display: flex; height: 59px; }
.app { width: 55px; display: flex; flex-direction: column; align-items: center; padding-top: 5px; height: 59px; }
.tile { position: relative; width: 48px; height: 48px; border-radius: 5px; display: flex; align-items: center; justify-content: center; padding-bottom: 1px; }
.active { background: #e9f1fb; box-shadow: 0 0 1px #b3c2d4; }
.who { position: absolute; right: 3px; top: 3px; width: 20px; height: 20px; border-radius: 50%; background: #0b8378; color: #fff; font-size: 12px; line-height: 20px; text-align: center; }
.app i { width: 8px; height: 4px; border-radius: 2px; background: #7d8792; margin-top: -4px; }
.app .wide { width: 20px; background: #4a77a5; }
.zm { font: 700 8px Lato, sans-serif; fill: #fff; }
.tray { margin-left: 45px; margin-top: -2px; display: grid; grid-template-columns: 37px 40px 43px 32px 61px 30px 30px 26px 90px 24px; align-items: center; font-size: 14.800px; line-height: 20px; letter-spacing: -.15px; }
.lang, .clock { display: flex; flex-direction: column; text-align: center; }
.lang { width: 48px; }
.clock { text-align: right; }
.count { margin-left: 8px; width: 24px; height: 24px; border-radius: 50%; background: #365f8c; color: #fff; font-size: 12.500px; text-align: center; line-height: 23px; }
</style>
